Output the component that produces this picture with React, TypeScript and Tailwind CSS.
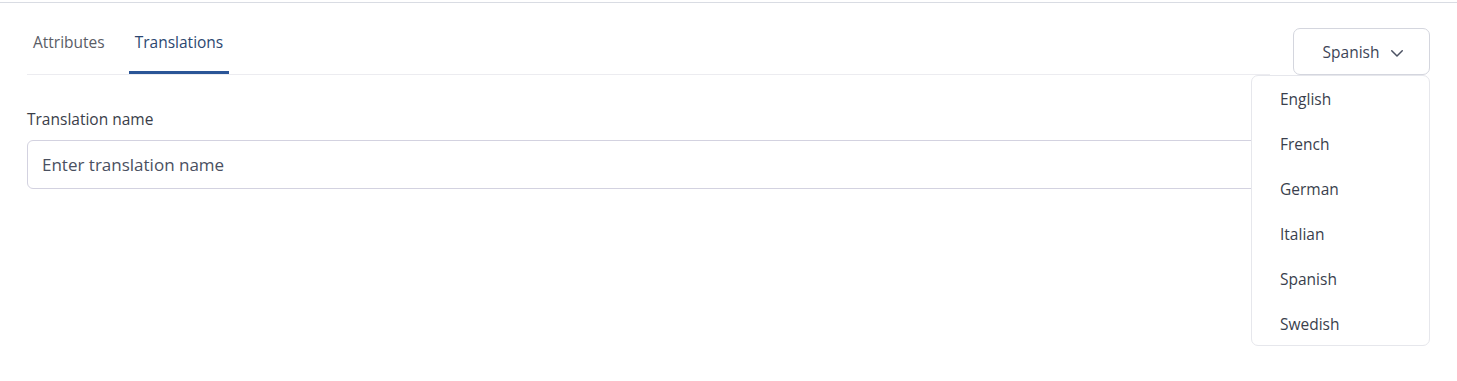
import { useState } from 'react'

const tabs = ['Attributes', 'Translations']
const languages = ['English', 'French', 'German', 'Italian', 'Spanish', 'Swedish']

const Chevron = () => (
    <svg width="18" height="18" viewBox="0 0 24 24" fill="none" stroke="currentColor" strokeWidth="2" strokeLinecap="round" strokeLinejoin="round">
        <path d="M5 9l7 7 7-7" />
    </svg>
)

const App = () => {
    const [active, setActive] = useState('Translations')
    const [lang, setLang] = useState('Spanish')

    return (
        <div className="min-h-screen bg-white pt-[2px] font-['Open_Sans',sans-serif]">
            <div className="border-t border-[#d9dce3]">
                <div className="flex items-start gap-[23px] px-[27px] pt-[25px]">
                    <div className="flex-1">
                        <div className="flex gap-[18px] border-b border-[#ececf0]">
                            {tabs.map(t => (
                                <button
                                    key={t}
                                    onClick={() => setActive(t)}
                                    className={
                                        t === active
                                            ? 'border-b-[3px] border-[#2a5597] px-[6px] pt-[2px] pb-[17px] text-[15.5px] leading-6 text-[#2c4770]'
                                            : 'border-b-[3px] border-transparent px-[6px] pt-[2px] pb-[17px] text-[15.5px] leading-6 text-[#5a5d66]'
                                    }
                                >
                                    {t}
                                </button>
                            ))}
                        </div>
                        <div className="mt-[34px]">
                            <label className="block text-[15.5px] leading-5 text-[#3a3e49]">Translation name</label>
                        </div>
                    </div>
                    <div className="relative">
                        <button className="flex h-[47px] w-[137px] items-center justify-center gap-[9px] rounded-[7px] border border-[#d4d6de] bg-white pt-[2px] text-[15.5px] text-[#3d4557]">
                            <span className="ml-[6px]">{lang}</span>
                            <span className="text-[#4b5263]"><Chevron /></span>
                        </button>
                        <ul className="absolute right-0 top-[47px] z-10 h-[271px] w-[179px] rounded-[7px] border border-[#e6e7ec] bg-white pt-[1px]">
                            {languages.map(l => (
                                <li
                                    key={l}
                                    onClick={() => setLang(l)}
                                    className="flex h-[45px] items-center pl-[28px] text-[15.5px] text-[#3a3f4d]"
                                >
                                    {l}
                                </li>
                            ))}
                        </ul>
                    </div>
                </div>
                <div className="px-[27px] pt-[11px]">
                    <input
                        placeholder="Enter translation name"
                        className="h-[49px] w-full rounded-[6px] border border-[#d3d2e0] px-[14px] text-[17px] text-[#3a3f4d] outline-none placeholder:text-[#4a5061]"
                    />
                </div>
            </div>
        </div>
    )
}

export default App
